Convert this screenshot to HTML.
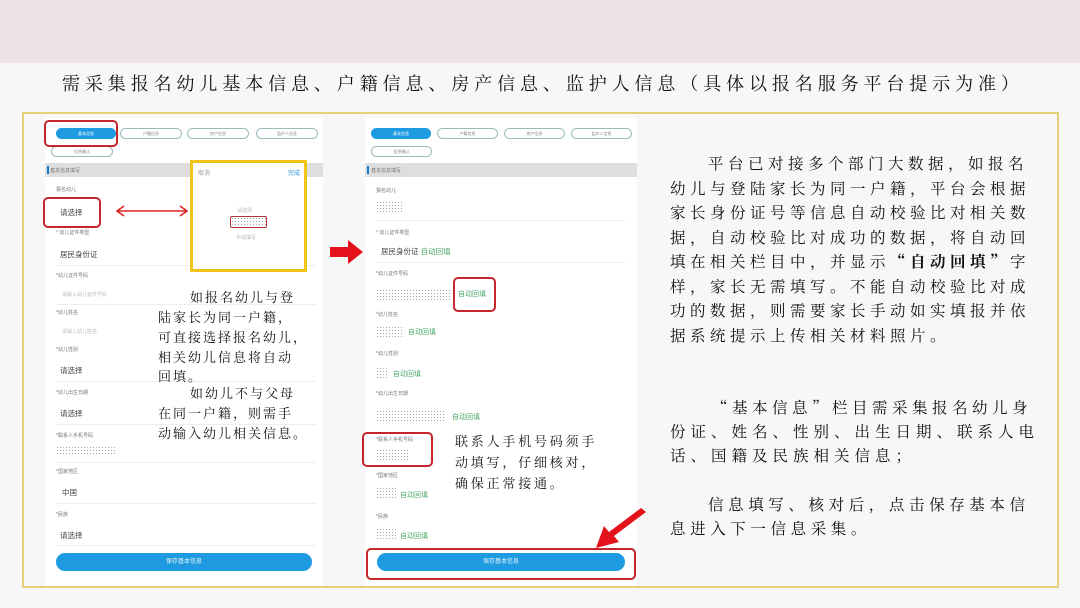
<!DOCTYPE html>
<html><head><meta charset="utf-8"><style>
*{margin:0;padding:0;box-sizing:border-box}
body{width:1080px;height:608px;overflow:hidden;background:#f7f7f7;position:relative;font-family:"Liberation Sans","Noto Sans CJK SC",sans-serif}
.a{position:absolute;white-space:nowrap}
.band{left:0;top:0;width:1080px;height:63px;background:#efe4e5}
.title{left:62px;top:70px;font-size:18px;letter-spacing:4.9px;color:#111;font-family:"Noto Serif CJK SC","WenQuanYi Zen Hei",serif}
.box{left:22px;top:112px;width:1037px;height:476px;border:2px solid #e6cf7a}
.phone{background:#fff}
.tab{position:absolute;height:11px;border:1px solid #9bb;border-radius:6px;font-size:4px;color:#888;text-align:center;line-height:9px}
.tab.on{background:#1e9be0;border-color:#1e9be0;color:#fff}
.hdr{position:absolute;height:14px;background:#dedede}
.hdr:before{content:"";position:absolute;left:2px;top:3px;width:2px;height:8px;background:#1a7bc4}
.lb{position:absolute;font-size:5px;color:#777}
.v{position:absolute;font-size:7.5px;color:#444}
.line{position:absolute;height:1px;background:#eee}
.dots{position:absolute;height:12px;background-image:radial-gradient(#aaa 0.6px,transparent 0.8px);background-size:3px 3px}
.g{position:absolute;font-size:7px;color:#4aa86a}
.btn{position:absolute;height:18px;border-radius:9px;background:#1e9be0;color:#e8f6ff;font-size:6px;text-align:center;line-height:18px}
.red{position:absolute;border:2.5px solid #c4262b;border-radius:5px}
.t{position:absolute;white-space:nowrap;font-size:15.5px;color:#111;font-family:"Noto Serif CJK SC","WenQuanYi Zen Hei",serif;line-height:20px;letter-spacing:4.5px}
.s{position:absolute;white-space:nowrap;font-size:13px;color:#111;font-family:"Noto Serif CJK SC","WenQuanYi Zen Hei",serif;line-height:18px;letter-spacing:2px}
</style></head><body>
<div class="a band"></div>
<div class="a title">需采集报名幼儿基本信息、户籍信息、房产信息、监护人信息（具体以报名服务平台提示为准）</div>
<div class="a box"></div>

<!-- left phone -->
<div class="a phone" style="left:45px;top:118px;width:278px;height:468px"></div>
<div class="tab on" style="left:56px;top:128px;width:60px">基本信息</div>
<div class="tab" style="left:120px;top:128px;width:62px">户籍信息</div>
<div class="tab" style="left:187px;top:128px;width:62px">房产信息</div>
<div class="tab" style="left:256px;top:128px;width:62px">监护人信息</div>
<div class="tab" style="left:51px;top:146px;width:62px">信息确认</div>
<div class="red" style="left:44px;top:120px;width:74px;height:27px"></div>
<div class="hdr" style="left:45px;top:163px;width:278px"></div>
<div class="lb" style="left:50px;top:167px">基本信息填写</div>
<div class="lb" style="left:56px;top:186px">报名幼儿</div>
<div class="v" style="left:60px;top:207px">请选择</div>
<div class="red" style="left:43px;top:197px;width:58px;height:31px"></div>
<div class="lb" style="left:56px;top:229px">* 幼儿证件类型</div>
<div class="v" style="left:60px;top:249px">居民身份证</div>
<div class="line" style="left:56px;top:265px;width:260px"></div>
<div class="lb" style="left:56px;top:272px">*幼儿证件号码</div>
<div class="lb" style="left:62px;top:291px;color:#bbb">请输入幼儿证件号码</div>
<div class="line" style="left:56px;top:304px;width:260px"></div>
<div class="lb" style="left:56px;top:309px">*幼儿姓名</div>
<div class="lb" style="left:62px;top:328px;color:#bbb">请输入幼儿姓名</div>
<div class="lb" style="left:56px;top:346px">*幼儿性别</div>
<div class="v" style="left:60px;top:365px">请选择</div>
<div class="line" style="left:56px;top:381px;width:260px"></div>
<div class="lb" style="left:56px;top:389px">*幼儿出生日期</div>
<div class="v" style="left:60px;top:408px">请选择</div>
<div class="line" style="left:56px;top:424px;width:260px"></div>
<div class="lb" style="left:56px;top:432px">*联系人手机号码</div>
<div class="dots" style="left:56px;top:446px;width:60px;height:9px"></div>
<div class="line" style="left:56px;top:462px;width:260px"></div>
<div class="lb" style="left:56px;top:468px">*国家地区</div>
<div class="v" style="left:62px;top:487px">中国</div>
<div class="line" style="left:56px;top:503px;width:260px"></div>
<div class="lb" style="left:56px;top:511px">*民族</div>
<div class="v" style="left:60px;top:530px">请选择</div>
<div class="line" style="left:56px;top:545px;width:260px"></div>
<div class="btn" style="left:56px;top:553px;width:256px">保存基本信息</div>

<!-- popup -->
<div class="a" style="left:190px;top:160px;width:117px;height:112px;background:#fff;border:3px solid #f0c419"></div>
<div class="lb" style="left:198px;top:168px;font-size:6px;color:#999">取消</div>
<div class="lb" style="left:288px;top:168px;font-size:6px;color:#2f8fd8">完成</div>
<div class="lb" style="left:237px;top:207px;color:#bbb">请选择</div>
<div class="dots" style="left:230px;top:216px;width:37px;height:12px;border:1.5px solid #b0333a;border-radius:2px"></div>
<div class="lb" style="left:236px;top:234px;color:#bbb">手动填写</div>
<svg class="a" style="left:112px;top:202px" width="80" height="18"><path d="M6 9H74" stroke="#d22" stroke-width="1.6"/><path d="M12 4L5 9L12 14M68 4L75 9L68 14" fill="none" stroke="#d22" stroke-width="1.6"/></svg>
<div class="s" style="left:190px;top:288px">如报名幼儿与登</div>
<div class="s" style="left:158px;top:308px">陆家长为同一户籍，</div>
<div class="s" style="left:158px;top:328px">可直接选择报名幼儿，</div>
<div class="s" style="left:158px;top:348px">相关幼儿信息将自动</div>
<div class="s" style="left:158px;top:367px">回填。</div>
<div class="s" style="left:190px;top:384px">如幼儿不与父母</div>
<div class="s" style="left:158px;top:404px">在同一户籍，则需手</div>
<div class="s" style="left:158px;top:424px">动输入幼儿相关信息。</div>

<!-- arrow -->
<svg class="a" style="left:330px;top:240px" width="34" height="24"><path d="M0 7H18V0L33 12L18 24V17H0Z" fill="#e3121b"/></svg>

<!-- middle phone -->
<div class="a phone" style="left:365px;top:118px;width:272px;height:468px"></div>
<div class="tab on" style="left:371px;top:128px;width:60px">基本信息</div>
<div class="tab" style="left:437px;top:128px;width:61px">户籍信息</div>
<div class="tab" style="left:504px;top:128px;width:61px">房产信息</div>
<div class="tab" style="left:571px;top:128px;width:61px">监护人信息</div>
<div class="tab" style="left:371px;top:146px;width:61px">信息确认</div>
<div class="hdr" style="left:365px;top:163px;width:272px"></div>
<div class="lb" style="left:371px;top:167px">基本信息填写</div>
<div class="lb" style="left:376px;top:187px">报名幼儿</div>
<div class="dots" style="left:376px;top:201px;width:27px"></div>
<div class="line" style="left:376px;top:220px;width:250px"></div>
<div class="lb" style="left:376px;top:229px">* 幼儿证件类型</div>
<div class="v" style="left:381px;top:246px">居民身份证 <span style="color:#4aa86a">自动回填</span></div>
<div class="line" style="left:376px;top:262px;width:250px"></div>
<div class="lb" style="left:376px;top:270px">*幼儿证件号码</div>
<div class="dots" style="left:376px;top:289px;width:76px"></div>
<div class="g" style="left:458px;top:289px">自动回填</div>
<div class="red" style="left:453px;top:277px;width:43px;height:35px"></div>
<div class="lb" style="left:376px;top:311px">*幼儿姓名</div>
<div class="dots" style="left:376px;top:326px;width:27px"></div>
<div class="g" style="left:408px;top:327px">自动回填</div>
<div class="lb" style="left:376px;top:350px">*幼儿性别</div>
<div class="dots" style="left:376px;top:367px;width:12px"></div>
<div class="g" style="left:393px;top:369px">自动回填</div>
<div class="lb" style="left:376px;top:390px">*幼儿出生日期</div>
<div class="dots" style="left:376px;top:410px;width:70px"></div>
<div class="g" style="left:452px;top:412px">自动回填</div>
<div class="lb" style="left:376px;top:436px">*联系人手机号码</div>
<div class="dots" style="left:376px;top:449px;width:33px"></div>
<div class="red" style="left:362px;top:432px;width:71px;height:35px"></div>
<div class="lb" style="left:376px;top:472px">*国家地区</div>
<div class="dots" style="left:376px;top:487px;width:20px"></div>
<div class="g" style="left:400px;top:490px">自动回填</div>
<div class="lb" style="left:376px;top:513px">*民族</div>
<div class="dots" style="left:376px;top:528px;width:20px"></div>
<div class="g" style="left:400px;top:531px">自动回填</div>
<div class="btn" style="left:377px;top:553px;width:248px">保存基本信息</div>
<div class="red" style="left:366px;top:548px;width:270px;height:32px"></div>
<div class="s" style="left:455px;top:432px;letter-spacing:2.8px">联系人手机号码须手</div>
<div class="s" style="left:455px;top:453px;letter-spacing:2.8px">动填写，仔细核对，</div>
<div class="s" style="left:455px;top:474px;letter-spacing:2.8px">确保正常接通。</div>
<svg class="a" style="left:594px;top:506px" width="56" height="44"><path d="M52 6L20 30L25 36L2 42L10 20L15 26L47 2Z" fill="#e3121b"/></svg>

<!-- right text -->
<div class="t" style="left:708px;top:153px">平台已对接多个部门大数据，如报名</div>
<div class="t" style="left:670px;top:178px">幼儿与登陆家长为同一户籍，平台会根据</div>
<div class="t" style="left:670px;top:202px">家长身份证号等信息自动校验比对相关数</div>
<div class="t" style="left:670px;top:227px">据，自动校验比对成功的数据，将自动回</div>
<div class="t" style="left:670px;top:251px">填在相关栏目中，并显示<b>“自动回填”</b>字</div>
<div class="t" style="left:670px;top:276px">样，家长无需填写。不能自动校验比对成</div>
<div class="t" style="left:670px;top:300px">功的数据，则需要家长手动如实填报并依</div>
<div class="t" style="left:670px;top:325px">据系统提示上传相关材料照片。</div>

<div class="t" style="left:712px;top:397px;letter-spacing:4.5px">“基本信息”栏目需采集报名幼儿身</div>
<div class="t" style="left:670px;top:421px;letter-spacing:5px">份证、姓名、性别、出生日期、联系人电</div>
<div class="t" style="left:670px;top:445px;letter-spacing:5px">话、国籍及民族相关信息；</div>
<div class="t" style="left:708px;top:494px;letter-spacing:4.6px">信息填写、核对后，点击保存基本信</div>
<div class="t" style="left:670px;top:518px;letter-spacing:4.6px">息进入下一信息采集。</div>
</body></html>
